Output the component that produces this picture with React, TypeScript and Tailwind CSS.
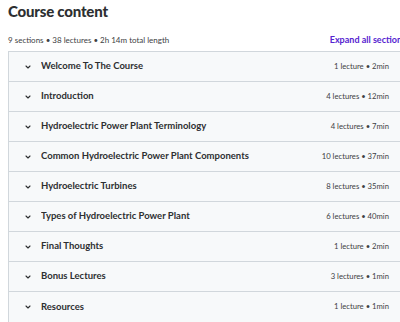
import React from 'react'

interface Section {
  title: string
  meta: string
}

const sections: Section[] = [
  { title: 'Welcome To The Course', meta: '1 lecture • 2min' },
  { title: 'Introduction', meta: '4 lectures • 12min' },
  { title: 'Hydroelectric Power Plant Terminology', meta: '4 lectures • 7min' },
  { title: 'Common Hydroelectric Power Plant Components', meta: '10 lectures • 37min' },
  { title: 'Hydroelectric Turbines', meta: '8 lectures • 35min' },
  { title: 'Types of Hydroelectric Power Plant', meta: '6 lectures • 40min' },
  { title: 'Final Thoughts', meta: '1 lecture • 2min' },
  { title: 'Bonus Lectures', meta: '3 lectures • 1min' },
  { title: 'Resources', meta: '1 lecture • 1min' },
]

const Chevron = () => (
  <svg width="6" height="4" viewBox="0 0 6 4" fill="none" className="shrink-0">
    <path d="M1 1l2 2 2-2" stroke="#2d2f31" strokeWidth="1.1" strokeLinecap="round" strokeLinejoin="round" />
  </svg>
)

export default function App() {
  return (
    <div className="h-[322px] w-[400px] overflow-hidden bg-white text-[#2d2f31] font-['Lato',sans-serif]">
      <div className="ml-2 w-[398px]">
        <h2 className="pt-[1px] text-[15px] font-black leading-[20px] tracking-[-0.2px]">Course content</h2>
        <div className="mt-[12px] flex h-[14px] items-center justify-between">
          <span className="text-[8px] text-[#3e4143]">9 sections • 38 lectures • 2h 14m total length</span>
          <span className="whitespace-nowrap text-[9px] font-bold text-[#5624d0]">Expand all sections</span>
        </div>
        <div className="mt-[4px] border border-[#d1d7dc]">
          {sections.map((s, i) => (
            <div
              key={s.title}
              className={`flex h-[30px] items-center bg-[#f7f9fa] pl-[16px] pr-[16px] ${i < sections.length - 1 ? 'border-b border-[#d1d7dc]' : ''}`}
            >
              <Chevron />
              <span className="ml-[10px] flex-1 truncate text-[9.5px] font-bold">{s.title}</span>
              <span className="whitespace-nowrap text-[7.7px] text-[#3e4143]">{s.meta}</span>
            </div>
          ))}
        </div>
      </div>
    </div>
  )
}
